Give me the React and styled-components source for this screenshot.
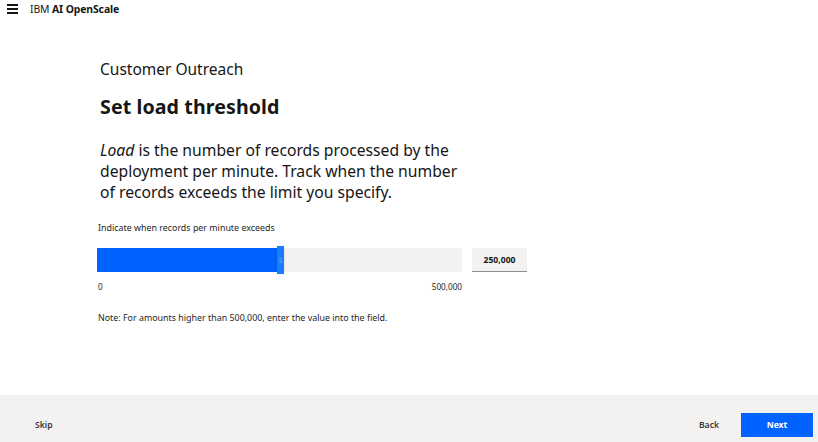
import React from "react";
import styled, { createGlobalStyle } from "styled-components";

const Global = createGlobalStyle`
  *, *::before, *::after { box-sizing: border-box; }
  html, body { margin: 0; padding: 0; background: #fff; }
  body { font-family: "Noto Sans", "Open Sans", sans-serif; color: #161616; }
  #root { height: 442px; }
`;

const Page = styled.div`
  width: 818px;
  height: 442px;
  display: flex;
  flex-direction: column;
  overflow: hidden;
`;

const Header = styled.header`
  height: 17px;
  flex-shrink: 0;
  display: flex;
  align-items: center;
  padding: 0 0 0 7px;
  gap: 12px;
`;

const Brand = styled.div`
  font-size: 10.4px;
  color: #161616;
  letter-spacing: -0.1px;
  b { font-weight: 700; }
`;

const Main = styled.main`
  flex: 1;
  min-height: 0;
  padding: 42px 0 0 100px;
  display: flex;
  flex-direction: column;
`;

const Eyebrow = styled.div`
  font-size: 15.5px;
  line-height: 20px;
  color: #161616;
`;

const Title = styled.h1`
  margin: 15px 0 0;
  font-size: 19.6px;
  line-height: 26px;
  font-weight: 700;
  letter-spacing: 0.1px;
`;

const Para = styled.p`
  margin: 20px 0 0;
  width: 370px;
  font-size: 15.7px;
  line-height: 21px;
  color: #161616;
  em { font-style: italic; }
`;

const Label = styled.div`
  margin: 18px 0 0 -2px;
  font-size: 8.9px;
  color: #262626;
`;

const SliderRow = styled.div`
  display: flex;
  align-items: center;
  margin: 14px 0 0 -3px;
  gap: 10px;
`;

const Track = styled.div`
  position: relative;
  width: 365px;
  height: 24px;
  background: #f3f2f1;
`;

const Fill = styled.div`
  height: 100%;
  background: #0062ff;
`;

const Handle = styled.div`
  position: absolute;
  top: -2px;
  width: 7px;
  height: 28px;
  background: #1a7dff;
  box-shadow: 0 0 2px rgba(0,0,0,0.2);
  display: flex;
  align-items: center;
  justify-content: center;
  &::after {
    content: "";
    width: 3px;
    height: 5px;
    border-top: 1px solid #5a9cf0;
    border-bottom: 1px solid #5a9cf0;
    background: linear-gradient(#5a9cf0, #5a9cf0) center/100% 1px no-repeat;
  }
`;

const ValueBox = styled.div`
  width: 55px;
  height: 24px;
  background: #f3f2f1;
  border-bottom: 1px solid #8d8d8d;
  display: flex;
  align-items: center;
  justify-content: center;
  font-size: 8.6px;
  font-weight: 700;
  color: #161616;
`;

const Scale = styled.div`
  display: flex;
  justify-content: space-between;
  width: 365px;
  margin: 9px 0 0 -3px;
  font-size: 8.2px;
  color: #262626;
  span:first-child { padding-left: 1px; }
`;

const Note = styled.div`
  margin: 19px 0 0 -2px;
  font-size: 8.9px;
  color: #262626;
`;

const Footer = styled.footer`
  height: 47px;
  flex-shrink: 0;
  background: #f3f2f1;
  display: flex;
  align-items: flex-end;
  padding: 0 5px 5px 35px;
`;

const TextBtn = styled.button`
  border: none;
  background: none;
  padding: 0;
  font-family: inherit;
  font-size: 8.6px;
  font-weight: 600;
  color: #393939;
  height: 24px;
  display: flex;
  align-items: center;
  cursor: pointer;
`;

const Spacer = styled.div`
  flex: 1;
`;

const NextBtn = styled.button`
  border: none;
  background: #0062ff;
  color: #fff;
  width: 72px;
  height: 24px;
  margin-left: 22px;
  font-family: inherit;
  font-size: 8.6px;
  font-weight: 700;
  cursor: pointer;
`;

const Burger = () => (
  <svg width="11" height="10" viewBox="0 0 11 10">
    <rect x="0" y="0" width="11" height="2" fill="#161616" />
    <rect x="0" y="4" width="11" height="2" fill="#161616" />
    <rect x="0" y="8" width="11" height="2" fill="#161616" />
  </svg>
);

export default function App() {
  const pct = 180 / 365;
  return (
    <Page>
      <Global />
      <Header>
        <Burger />
        <Brand>IBM <b>AI OpenScale</b></Brand>
      </Header>
      <Main>
        <Eyebrow>Customer Outreach</Eyebrow>
        <Title>Set load threshold</Title>
        <Para>
          <em>Load</em> is the number of records processed by the deployment per minute. Track when the number of records exceeds the limit you specify.
        </Para>
        <Label>Indicate when records per minute exceeds</Label>
        <SliderRow>
          <Track>
            <Fill style={{ width: `${pct * 100}%` }} />
            <Handle style={{ left: `${pct * 100}%` }} />
          </Track>
          <ValueBox>250,000</ValueBox>
        </SliderRow>
        <Scale>
          <span>0</span>
          <span>500,000</span>
        </Scale>
        <Note>Note: For amounts higher than 500,000, enter the value into the field.</Note>
      </Main>
      <Footer>
        <TextBtn>Skip</TextBtn>
        <Spacer />
        <TextBtn>Back</TextBtn>
        <NextBtn>Next</NextBtn>
      </Footer>
    </Page>
  );
}
